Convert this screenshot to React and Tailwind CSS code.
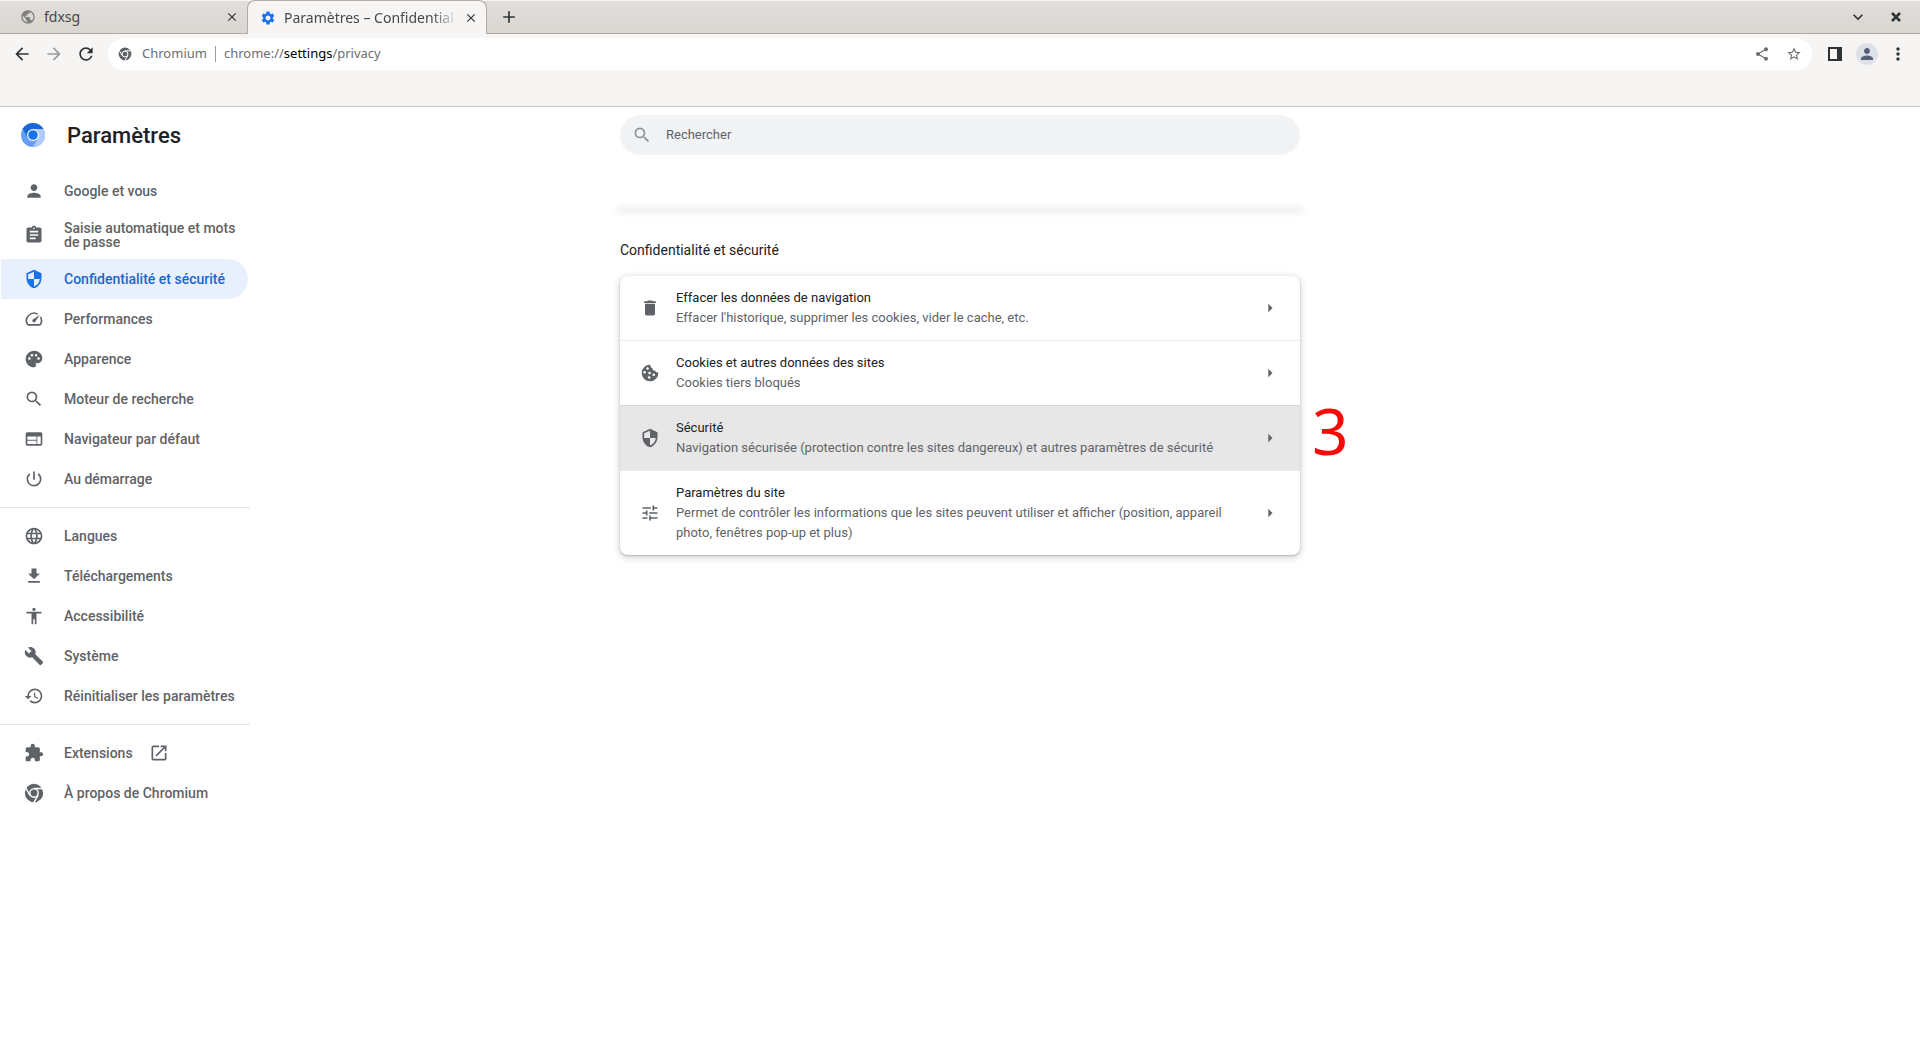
import React from 'react';
import {
  MdAccessibility, MdAdd, MdArrowBack, MdArrowForward, MdArrowRight, MdAssignment, MdBuild, MdClose,
  MdDelete, MdExpandMore, MdExtension, MdFileDownload, MdHistory, MdLanguage, MdMoreVert,
  MdOpenInNew, MdPalette, MdPerson, MdPowerSettingsNew, MdPublic, MdRefresh, MdSearch, MdSecurity,
  MdSettings, MdShare, MdSpeed, MdStarBorder, MdTune, MdWeb
} from "react-icons/md";

const ProductIcon = ({className}) => (
  <svg viewBox="0 0 24 24" className={className} fill="none">
    <circle cx="12" cy="12" r="8" stroke="currentColor" strokeWidth="6"/>
    <path d="M12 6.5H23M7.2 14.8L1.8 5.4M16.8 14.8L11.4 24.2" stroke="#fff" strokeWidth="1.7"/>
    <circle cx="12" cy="12" r="5" fill="currentColor" stroke="#fff" strokeWidth="1.7"/>
  </svg>
);

const ChromiumLogo = () => (
  <svg viewBox="0 0 24 24" className="size-6" fill="none">
    <circle cx="12" cy="12" r="12" fill="#669df6"/>
    <path d="M12 6h10.4A12 12 0 0 1 12 24l5.2-9z" fill="#aecbfa"/>
    <path d="M1.6 6A12 12 0 0 1 22.4 6H12L6.8 15z" fill="#1967d2"/>
    <circle cx="12" cy="12" r="6" fill="#fff"/>
    <circle cx="12" cy="12" r="4.8" fill="#1a73e8"/>
  </svg>
);

const CookieIcon = ({className}) => (
  <svg viewBox="0 0 24 24" className={className}>
    <path fill="currentColor" d="M12.5 2A10 10 0 1 0 22 11.2c-1.7.6-3.3-.3-3.6-2-2 .3-3.6-1-3.4-3-1.700-.4-2.700-2.300-2.500-4.200z"/>
    <g fill="#fff">
      <circle cx="9" cy="6.500" r="1.500"/>
      <circle cx="5.500" cy="11" r="1.500"/>
      <circle cx="11.500" cy="12" r="1.500"/>
      <circle cx="16.500" cy="14" r="1.500"/>
      <circle cx="11" cy="17.500" r="1.500"/>
    </g>
  </svg>
);

const MENU_GROUPS = [
  [
    {label: "Google et vous", icon: MdPerson},
    {label: "Saisie automatique et mots de passe", icon: MdAssignment},
    {label: "Confidentialité et sécurité", icon: MdSecurity, active: true},
    {label: "Performances", icon: MdSpeed},
    {label: "Apparence", icon: MdPalette},
    {label: "Moteur de recherche", icon: MdSearch},
    {label: "Navigateur par défaut", icon: MdWeb},
    {label: "Au démarrage", icon: MdPowerSettingsNew},
  ],
  [
    {label: "Langues", icon: MdLanguage},
    {label: "Téléchargements", icon: MdFileDownload},
    {label: "Accessibilité", icon: MdAccessibility},
    {label: "Système", icon: MdBuild},
    {label: "Réinitialiser les paramètres", icon: MdHistory},
  ],
  [
    {label: "Extensions", icon: MdExtension, external: true},
    {label: "À propos de Chromium", icon: ProductIcon},
  ],
];

const PRIVACY_ROWS = [
  {
    title: "Effacer les données de navigation",
    text: "Effacer l'historique, supprimer les cookies, vider le cache, etc.",
    icon: MdDelete,
  },
  {
    title: "Cookies et autres données des sites",
    text: "Cookies tiers bloqués",
    icon: CookieIcon,
  },
  {
    title: "Sécurité",
    text: "Navigation sécurisée (protection contre les sites dangereux) et autres paramètres de sécurité",
    icon: MdSecurity,
    highlighted: true,
    step: "3",
  },
  {
    title: "Paramètres du site",
    text: "Permet de contrôler les informations que les sites peuvent utiliser et afficher (position, appareil photo, fenêtres pop-up et plus)",
    icon: MdTune,
  },
];

const TabStrip = () => (
  <div className="flex h-[34px] border-t border-[#f6f5f4] bg-linear-to-b from-[#e1dedb] to-[#d9d5d0] text-[#2e3436]">
    <div className="flex w-[247px] items-center border-b border-[#aeaba9] pr-2 pl-5">
      <MdPublic className="size-4 shrink-0 text-[#808080]"/>
      <span className="ml-2 flex-1 text-sm text-[#45494b]">fdxsg</span>
      <button aria-label="Fermer l'onglet"><MdClose className="size-3.5"/></button>
    </div>
    <div className="-mt-px flex h-[34px] w-[240px] items-center rounded-t-lg border border-b-0 border-[#aeaba9] bg-[#f6f5f4] pr-2 pl-3">
      <MdSettings className="size-4 shrink-0 text-[#1a73e8]"/>
      <span className="ml-2 flex-1 text-sm whitespace-nowrap text-[#45494b] mask-r-from-85% mask-r-to-100%">
        Paramètres – Confidential
      </span>
      <button aria-label="Fermer l'onglet" className="ml-1.5"><MdClose className="size-3.5"/></button>
    </div>
    <div className="flex flex-1 items-center border-b border-[#aeaba9] pr-4 pl-3">
      <button aria-label="Nouvel onglet"><MdAdd className="size-5"/></button>
      <button aria-label="Rechercher des onglets" className="ml-auto"><MdExpandMore className="size-5"/></button>
      <button aria-label="Fermer" className="ml-5">
        <svg viewBox="0 0 16 16" className="size-4" fill="none" stroke="currentColor" strokeWidth="2.500">
          <path d="M4 4l8 8M12 4l-8 8"/>
        </svg>
      </button>
    </div>
  </div>
);

const Toolbar = () => (
  <div className="h-[73px] border-b border-[#c8c3bd] bg-[#f6f5f4] pt-1 text-[#2e3436]">
    <div className="flex h-8 items-center pr-3 pl-3">
      <button aria-label="Retour"><MdArrowBack className="size-5"/></button>
      <button aria-label="Avancer" className="ml-3 text-[#9b9d9d]"><MdArrowForward className="size-5"/></button>
      <button aria-label="Actualiser" className="ml-3"><MdRefresh className="size-5"/></button>
      <div className="ml-3 flex h-8 flex-1 items-center rounded-full bg-white pr-2.5 pl-2.5 text-[13px] text-[#6b6e70]">
        <ProductIcon className="size-3.5 text-[#5f6368]"/>
        <span className="ml-2.5">Chromium</span>
        <span className="mx-2 h-4 w-px bg-[#9b9d9d]"/>
        <span>chrome://<span className="text-black">settings</span>/privacy</span>
        <button aria-label="Partager" className="ml-auto"><MdShare className="size-4"/></button>
        <button aria-label="Ajouter aux favoris" className="ml-4"><MdStarBorder className="size-4"/></button>
      </div>
      <button aria-label="Panneau latéral" className="ml-4">
        <svg viewBox="0 0 14 14" className="size-3.5" fill="none">
          <path d="M0 0h14v14H0zM2 2v10h7V2z" fill="currentColor" fillRule="evenodd"/>
        </svg>
      </button>
      <button aria-label="Profil" className="ml-3.5 flex size-[22px] items-center justify-center rounded-full bg-[#dee1e6] text-[#566076]">
        <MdPerson className="size-[18px]"/>
      </button>
      <button aria-label="Menu" className="ml-2.5"><MdMoreVert className="size-5"/></button>
    </div>
  </div>
);

const MenuItem = ({item}) => {
  const Icon = item.icon;
  return (
    <a href="#" className={`ml-px flex min-h-10 items-center rounded-r-full py-2.5 pl-[23px] pr-2 ${item.active ? "bg-[#e8f0fe] text-[#1967d2]" : "text-[#5f6368]"}`}>
      <Icon className={`size-5 shrink-0 ${item.active ? "text-[#1a73e8]" : ""}`}/>
      <span className="ml-5 text-sm/[14px] font-medium">{item.label}</span>
      {item.external && <MdOpenInNew className="ml-4 size-5"/>}
    </a>
  );
};

const SideMenu = () => (
  <aside className="w-[250px]">
    <div className="flex h-14 items-center pl-[21px]">
      <ChromiumLogo/>
      <h1 className="ml-[22px] text-[22px] font-medium text-[#202124]">Paramètres</h1>
    </div>
    <nav className="pt-2">
      {MENU_GROUPS.map((group, index) => (
        <div key={index} className={index > 0 ? "mt-2 border-t border-[#e4e5e7] pt-2" : ""}>
          <div className="mr-0.5">
            {group.map((item) => <MenuItem key={item.label} item={item}/>)}
          </div>
        </div>
      ))}
    </nav>
  </aside>
);

const PrivacyRow = ({row}) => {
  const Icon = row.icon;
  return (
    <li className={`relative not-first:border-t ${row.highlighted ? "border-[#d6d6d6] bg-[#e7e7e7]" : "border-[#ececec]"}`}>
      <a href="#" className="flex items-center py-3 pr-5 pl-5 text-[13px]/5">
        <Icon className="size-5 shrink-0 text-[#5f6368]"/>
        <span className="ml-4 flex-1">
          <span className="block text-[#202124]">{row.title}</span>
          <span className="block text-[#5f6368]">{row.text}</span>
        </span>
        <MdArrowRight className="ml-4 size-5 text-[#5f6368]"/>
      </a>
      {row.step && (
        <span className="absolute inset-y-0 left-full ml-3 flex items-center pb-3.5 font-['Noto_Sans',sans-serif] text-[64px]/[64px] text-[#f60a0a]">
          {row.step}
        </span>
      )}
    </li>
  );
};

const PrivacyPage = () => (
  <main className="flex flex-col pt-2">
    <label className="flex h-10 items-center rounded-full bg-[#f1f3f4] px-3">
      <MdSearch className="size-5 text-[#8f9295]"/>
      <input type="search" aria-label="Rechercher" placeholder="Rechercher"
             className="ml-3.5 flex-1 bg-transparent text-[13px] outline-none placeholder:text-[#5f6368]"/>
    </label>
    <div className="mt-[53px] rounded shadow-[0_1px_2px_0_rgb(60_64_67/0.3),0_2px_6px_2px_rgb(60_64_67/0.15)]"/>
    <h2 className="mt-8 text-sm/5 text-[#202124]">Confidentialité et sécurité</h2>
    <ul className="mt-4 rounded-lg bg-white shadow-[0_1px_2px_0_rgb(60_64_67/0.3),0_2px_6px_2px_rgb(60_64_67/0.15)]">
      {PRIVACY_ROWS.map((row) => <PrivacyRow key={row.title} row={row}/>)}
    </ul>
  </main>
);

const App = () => {
  return (
    <div className="min-h-screen bg-white font-[Roboto,sans-serif]">
      <header className="font-['Noto_Sans',sans-serif]">
        <TabStrip/>
        <Toolbar/>
      </header>
      <div className="grid grid-cols-[1fr_minmax(0,680px)_1fr]">
        <SideMenu/>
        <PrivacyPage/>
      </div>
    </div>
  );
};

export default App;
